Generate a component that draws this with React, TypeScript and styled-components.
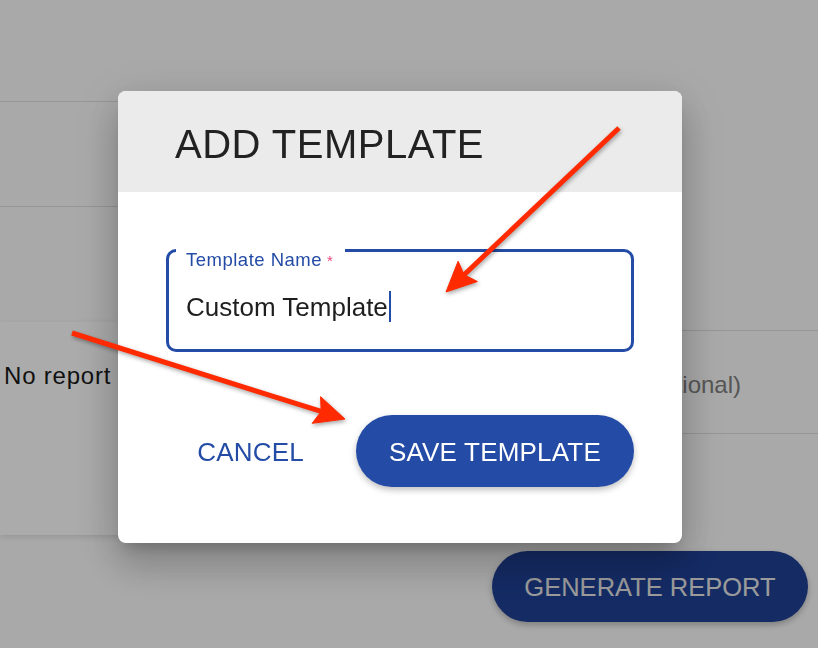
import styled, { createGlobalStyle } from "styled-components";

const GlobalStyle = createGlobalStyle`
  html, body {
    margin: 0;
    padding: 0;
    background: #fdfdfd;
    font-family: "Liberation Sans", Arial, sans-serif;
    overflow: hidden;
  }
  * {
    box-sizing: border-box;
  }
`;

const BLUE = "#244ca6";

const Page = styled.div`
  width: 818px;
  height: 648px;
  display: grid;
  grid-template-columns: 420px 1fr;
`;

const LeftColumn = styled.div`
  padding-top: 101px;
  display: flex;
  flex-direction: column;
`;

const RightColumn = styled.div`
  padding-top: 330px;
  display: flex;
  flex-direction: column;
  align-items: flex-end;
`;

const ListRow = styled.div`
  height: 106px;
  border-top: 1px solid #e0e0e0;
  border-bottom: 1px solid #e0e0e0;
`;

const EmptyCard = styled.div`
  margin-top: 115px;
  height: 213px;
  background: #fff;
  padding: 40px 4px 0;
  box-shadow: 0 2px 6px rgba(0, 0, 0, 0.12);
  font-size: 24px;
  letter-spacing: 0.8px;
  line-height: 1.2;
  color: #1a1a1a;
  white-space: nowrap;
`;

const FieldRow = styled.div`
  width: 100%;
  height: 104px;
  border-top: 1px solid #e0e0e0;
  border-bottom: 1px solid #e0e0e0;
  display: flex;
  align-items: center;
  justify-content: flex-end;
  padding: 6px 77px 0 0;
  font-size: 24px;
  line-height: 1;
  color: #808080;
  white-space: nowrap;
`;

const GenerateButton = styled.button`
  margin: 117px 10px 0 0;
  width: 316px;
  height: 71px;
  border: none;
  border-radius: 36px;
  padding-top: 3px;
  background: #1f4096;
  color: #e8e8e8;
  font-family: inherit;
  font-size: 25.5px;
  text-transform: uppercase;
  box-shadow: 0 3px 6px rgba(0, 0, 0, 0.25);
`;

const Backdrop = styled.div`
  position: fixed;
  inset: 0;
  background: rgba(0, 0, 0, 0.33);
  display: flex;
  align-items: flex-start;
  padding: 91px 0 0 118px;
`;

const Dialog = styled.div`
  width: 564px;
  background: #fff;
  border-radius: 8px;
  overflow: hidden;
  box-shadow: 0 11px 15px -7px rgba(0, 0, 0, 0.2),
    0 24px 38px 3px rgba(0, 0, 0, 0.14), 0 9px 46px 8px rgba(0, 0, 0, 0.12);
`;

const DialogHeader = styled.div`
  height: 101px;
  background: #ebebeb;
  display: flex;
  align-items: center;
  padding: 6px 0 0 57px;
`;

const Title = styled.h2`
  margin: 0;
  font-size: 40px;
  letter-spacing: 0.5px;
  font-weight: 400;
  color: #222;
  line-height: 1.117;
`;

const DialogBody = styled.div`
  padding: 56px 48px 56px;
`;

const Field = styled.fieldset`
  margin: 0;
  height: 104px;
  border: 3px solid ${BLUE};
  border-radius: 10px;
  padding: 39px 17px 0;
`;

const Legend = styled.legend`
  margin-left: -10px;
  padding: 0 12px 0 10px;
  line-height: 3px;
  font-size: 18.5px;
  letter-spacing: 0.5px;
  color: ${BLUE};
  position: relative;
  top: 10px;
`;

const Required = styled.span`
  color: #e8467c;
  font-size: 15px;
  margin-left: 5px;
`;

const Value = styled.div`
  font-size: 26px;
  line-height: 30px;
  color: #1e1e1e;
  white-space: nowrap;
`;

const Caret = styled.span`
  display: inline-block;
  width: 2px;
  height: 31px;
  margin-left: 1px;
  background: ${BLUE};
  vertical-align: -6px;
`;

const Actions = styled.div`
  margin-top: 63px;
  display: flex;
  justify-content: flex-end;
  align-items: center;
  gap: 26px;
`;

const Button = styled.button<{ $filled?: boolean }>`
  height: 72px;
  border: none;
  border-radius: 36px;
  padding: ${(p) => (p.$filled ? "2px 33px 0" : "2px 26px 0")};
  min-width: ${(p) => (p.$filled ? "277px" : "0")};
  font-family: inherit;
  font-size: 26px;
  letter-spacing: 0.2px;
  text-transform: uppercase;
  background: ${(p) => (p.$filled ? BLUE : "transparent")};
  color: ${(p) => (p.$filled ? "#fff" : BLUE)};
  box-shadow: ${(p) => (p.$filled ? "0 3px 6px rgba(0, 0, 0, 0.25)" : "none")};
`;

const Annotations = styled.svg`
  position: fixed;
  inset: 0;
  pointer-events: none;
  filter: drop-shadow(1px 2px 2px rgba(0, 0, 0, 0.35));
`;

type Pt = [number, number];

const Arrow = ({ from, to }: { from: Pt; to: Pt }) => {
  const dx = to[0] - from[0];
  const dy = to[1] - from[1];
  const len = Math.hypot(dx, dy);
  const ux = dx / len;
  const uy = dy / len;
  const headLen = 30;
  const half = 14;
  const bx = to[0] - ux * headLen;
  const by = to[1] - uy * headLen;
  const nx = to[0] - ux * (headLen - 5);
  const ny = to[1] - uy * (headLen - 5);
  const head = [
    `${to[0]},${to[1]}`,
    `${bx - uy * half},${by + ux * half}`,
    `${nx},${ny}`,
    `${bx + uy * half},${by - ux * half}`,
  ].join(" ");
  return (
    <g fill="#ff2a00" stroke="#ff2a00">
      <line x1={from[0]} y1={from[1]} x2={nx} y2={ny} strokeWidth={5} />
      <polygon points={head} strokeWidth={1} strokeLinejoin="round" />
    </g>
  );
};

export default function App() {
  return (
    <>
      <GlobalStyle />
      <Page>
        <LeftColumn>
          <ListRow />
          <EmptyCard>No report templates available</EmptyCard>
        </LeftColumn>
        <RightColumn>
          <FieldRow>Report Description (Optional)</FieldRow>
          <GenerateButton>Generate Report</GenerateButton>
        </RightColumn>
      </Page>

      <Backdrop>
        <Dialog>
          <DialogHeader>
            <Title>ADD TEMPLATE</Title>
          </DialogHeader>
          <DialogBody>
            <Field>
              <Legend>
                Template Name<Required>*</Required>
              </Legend>
              <Value>
                Custom Template
                <Caret />
              </Value>
            </Field>
            <Actions>
              <Button>Cancel</Button>
              <Button $filled>Save Template</Button>
            </Actions>
          </DialogBody>
        </Dialog>
      </Backdrop>

      <Annotations width="818" height="648" viewBox="0 0 818 648">
        <Arrow from={[619, 128]} to={[446, 292]} />
        <Arrow from={[72, 333]} to={[345, 419]} />
      </Annotations>
    </>
  );
}
